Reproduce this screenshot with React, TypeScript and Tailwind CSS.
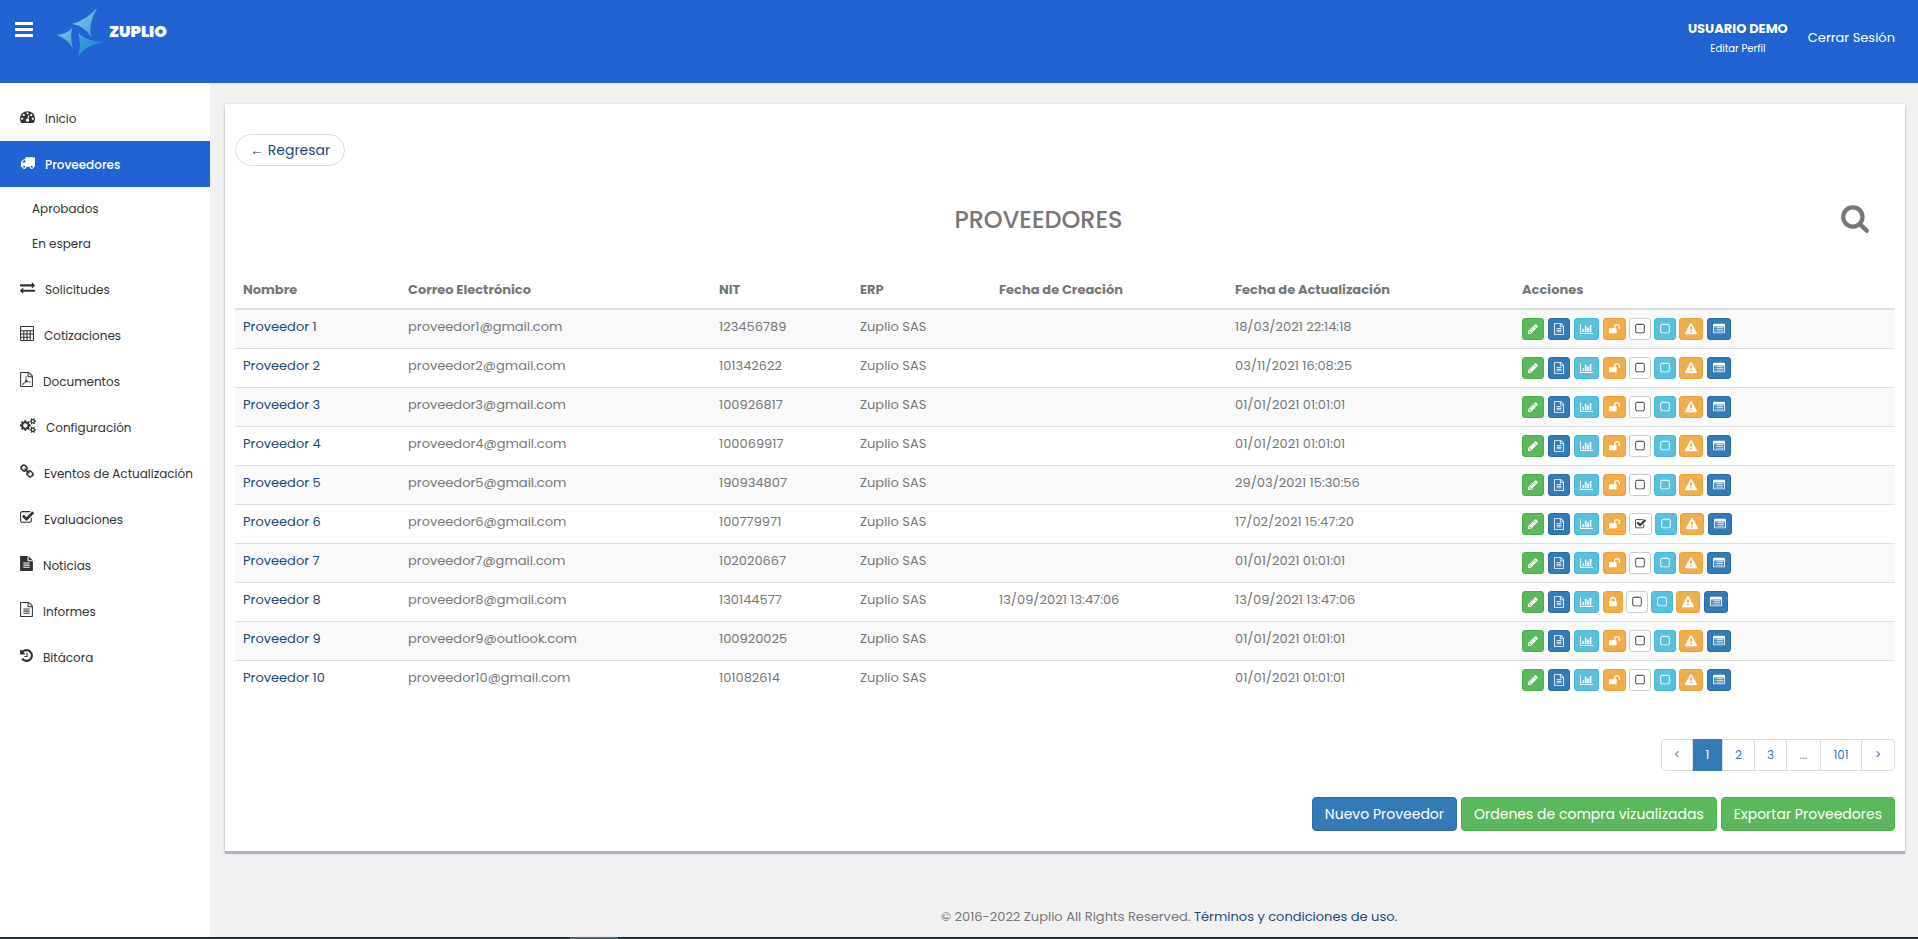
import type { ReactNode } from "react";

const icons = {
  bars: { w: 1536, d: "M1536 1344v128q0 26-19 45t-45 19h-1408q-26 0-45-19t-19-45v-128q0-26 19-45t45-19h1408q26 0 45 19t19 45zm0-512v128q0 26-19 45t-45 19h-1408q-26 0-45-19t-19-45v-128q0-26 19-45t45-19h1408q26 0 45 19t19 45zm0-512v128q0 26-19 45t-45 19h-1408q-26 0-45-19t-19-45v-128q0-26 19-45t45-19h1408q26 0 45 19t19 45z" },
  dashboard: { w: 1792, d: "M384 1152q0-53-37.500-90.500t-90.500-37.500-90.500 37.500-37.500 90.500 37.500 90.500 90.500 37.500 90.500-37.500 37.500-90.500zm192-448q0-53-37.500-90.500t-90.500-37.500-90.500 37.500-37.500 90.500 37.500 90.500 90.500 37.500 90.500-37.500 37.500-90.500zm428 481l101-382q6-26-7.500-48.500t-38.500-29.500-48 6.500-30 39.500l-101 382q-60 5-107 43.500t-63 98.500q-20 77 20 146t117 89 146-20 89-117q16-60-6-117t-72-91zm660-33q0-53-37.500-90.500t-90.500-37.500-90.500 37.500-37.500 90.500 37.500 90.500 90.500 37.500 90.500-37.500 37.500-90.500zm-640-640q0-53-37.500-90.500t-90.500-37.500-90.500 37.500-37.500 90.500 37.500 90.500 90.500 37.500 90.500-37.500 37.500-90.500zm448 192q0-53-37.500-90.500t-90.500-37.500-90.500 37.500-37.500 90.500 37.500 90.500 90.500 37.500 90.500-37.500 37.500-90.500zm320 448q0 261-141 483-19 29-54 29h-1402q-35 0-54-29-141-221-141-483 0-182 71-348t191-286 286-191 348-71 348 71 286 191 191 286 71 348z" },
  truck: { w: 1792, d: "M640 1408q0-52-38-90t-90-38-90 38-38 90 38 90 90 38 90-38 38-90zm-384-512h384v-256h-158q-13 0-22 9l-195 195q-9 9-9 22v30zm1280 512q0-52-38-90t-90-38-90 38-38 90 38 90 90 38 90-38 38-90zm256-1088v1024q0 15-4 26.500t-13.500 18.500-16.500 11.500-23.500 6-22.500 2-25.500 0-22.500-.5q0 106-75 181t-181 75-181-75-75-181h-384q0 106-75 181t-181 75-181-75-75-181h-64q-3 0-22.500.5t-25.500 0-22.500-2-23.500-6-16.500-11.500-13.500-18.500-4-26.500q0-26 19-45t45-19v-320q0-8-.5-35t0-38 2.500-34.500 6.500-37 14-30.500 22.500-30l198-198q19-19 50.500-32t58.500-13h160v-192q0-26 19-45t45-19h1024q26 0 45 19t19 45z" },
  exchange: { w: 1792, d: "M1792 1184v192q0 13-9.500 22.500t-22.500 9.500h-1376v192q0 13-9.500 22.500t-22.500 9.500q-12 0-24-10l-319-320q-9-9-9-22 0-14 9-23l320-320q9-9 23-9 13 0 22.500 9.500t9.500 22.500v192h1376q13 0 22.500 9.500t9.500 22.500zm0-544q0 14-9 23l-320 320q-9 9-23 9-13 0-22.500-9.500t-9.500-22.500v-192h-1376q-13 0-22.500-9.500t-9.500-22.500v-192q0-13 9.500-22.500t22.500-9.500h1376v-192q0-14 9-23t23-9q12 0 24 10l319 319q9 9 9 23z" },
  calculator: { w: 1664, d: "M128 0h1408q128 0 128 128v1536q0 128-128 128h-1408q-128 0-128-128v-1536q0-128 128-128zm0 128v384h1408v-384zm0 512v256h256v-256zm384 0v256h256v-256zm384 0v256h256v-256zm384 0v256h256v-256zm-1152 384v256h256v-256zm384 0v256h256v-256zm384 0v256h256v-256zm384 0v640h256v-640zm-1152 384v256h256v-256zm384 0v256h256v-256zm384 0v256h256v-256z" },
  filePdf: { w: 1536, d: "M1468 380q28 28 48 76t20 88v1152q0 40-28 68t-68 28h-1344q-40 0-68-28t-28-68v-1600q0-40 28-68t68-28h896q40 0 88 20t76 48zm-444-244v376h376q-10-29-22-41l-313-313q-12-12-41-22zm384 1528v-1024h-416q-40 0-68-28t-28-68v-416h-768v1536h1280zm-514-593q33 26 84 56 59-7 117-7 147 0 177 49 16 22 2 52 0 1-1 2l-2 2v1q-6 38-71 38-48 0-115-20t-130-53q-221 24-392 83-153 262-242 262-15 0-28-7l-24-12q-1-1-6-5-10-10-6-36 9-40 56-91.500t132-96.500q14-9 23 6 2 2 2 4 52-85 107-197 68-136 104-262-24-82-30.500-159.500t6.500-127.500q11-40 42-40h22q23 0 35 15 18 21 9 68-2 6-4 8 1 3 1 8v30q-2 123-14 192 55 164 146 238z" },
  cogs: { w: 1920, d: "M896 896q0-106-75-181t-181-75-181 75-75 181 75 181 181 75 181-75 75-181zm768 512q0-52-38-90t-90-38-90 38-38 90q0 53 37.500 90.500t90.500 37.500 90.500-37.500 37.500-90.500zm0-1024q0-52-38-90t-90-38-90 38-38 90q0 53 37.500 90.500t90.500 37.500 90.500-37.500 37.500-90.500zm-384 421v185q0 10-7 19.500t-16 10.500l-155 24q-11 35-32 76 34 48 90 115 7 11 7 20 0 12-7 19-23 30-82.500 89.500t-78.500 59.500q-11 0-21-7l-115-90q-37 19-77 31-11 108-23 155-7 24-30 24h-186q-11 0-20-7.500t-10-17.500l-23-153q-34-10-75-31l-118 89q-7 7-20 7-11 0-21-8-144-133-144-160 0-9 7-19 10-14 41-53t47-61q-23-44-35-82l-152-24q-10-1-17-9.500t-7-19.500v-185q0-10 7-19.500t16-10.500l155-24q11-35 32-76-34-48-90-115-7-11-7-20 0-12 7-20 22-30 82-89t79-59q11 0 21 7l115 90q34-18 77-32 11-108 23-154 7-24 30-24h186q11 0 20 7.500t10 17.500l23 153q34 10 75 31l118-89q8-7 20-7 11 0 21 8 144 133 144 160 0 8-7 19-12 16-42 54t-45 60q23 48 34 82l152 23q10 2 17 10.500t7 19.500zm640 533v140q0 16-149 31-12 27-30 52 51 113 51 138 0 4-4 7-122 71-124 71-8 0-46-47t-52-68q-20 2-30 2t-30-2q-14 21-52 68t-46 47q-2 0-124-71-4-3-4-7 0-25 51-138-18-25-30-52-149-15-149-31v-140q0-16 149-31 13-29 30-52-51-113-51-138 0-4 4-7 4-2 35-20t59-34 30-16q8 0 46 46.500t52 67.500q20-2 30-2t30 2q51-71 92-112l6-2q4 0 124 70 4 3 4 7 0 25-51 138 17 23 30 52 149 15 149 31zm0-1024v140q0 16-149 31-12 27-30 52 51 113 51 138 0 4-4 7-122 71-124 71-8 0-46-47t-52-68q-20 2-30 2t-30-2q-14 21-52 68t-46 47q-2 0-124-71-4-3-4-7 0-25 51-138-18-25-30-52-149-15-149-31v-140q0-16 149-31 13-29 30-52-51-113-51-138 0-4 4-7 4-2 35-20t59-34 30-16q8 0 46 46.500t52 67.500q20-2 30-2t30 2q51-71 92-112l6-2q4 0 124 70 4 3 4 7 0 25-51 138 17 23 30 52 149 15 149 31z" },
  chain: { w: 1664, x: 64, d: "M1520 1216q0-40-28-68l-208-208q-28-28-68-28-42 0-72 32 3 3 19 18.500t21.500 21.500 15 19 13 25.500 3.500 27.500q0 40-28 68t-68 28q-15 0-27.500-3.500t-25.500-13-19-15-21.500-21.500-18.500-19q-33 31-33 73 0 40 28 68l206 207q27 27 68 27 40 0 68-26l147-146q28-28 28-67zm-703-705q0-40-28-68l-206-207q-28-28-68-28-39 0-68 27l-147 146q-28 28-28 67 0 40 28 68l208 208q27 27 68 27 42 0 72-31-3-3-19-18.500t-21.500-21.500-15-19-13-25.500-3.500-27.500q0-40 28-68t68-28q15 0 27.500 3.500t25.500 13 19 15 21.500 21.500 18.500 19q33-31 33-73zm895 705q0 120-85 203l-147 146q-83 83-203 83-121 0-204-85l-206-207q-83-83-83-203 0-123 88-209l-88-88q-86 88-208 88-120 0-204-84l-208-208q-84-84-84-204t85-203l147-146q83-83 203-83 121 0 204 85l206 207q83 83 83 203 0 123-88 209l88 88q86-88 208-88 120 0 204 84l208 208q84 84 84 204z" },
  checkSquare: { w: 1664, x: 64, d: "M1472 930v318q0 119-84.500 203.500t-203.500 84.500h-832q-119 0-203.500-84.500t-84.500-203.500v-832q0-119 84.500-203.500t203.500-84.500h832q63 0 117 25 15 7 18 23 3 17-9 29l-49 49q-10 10-23 10-3 0-9-2-23-6-45-6h-832q-66 0-113 47t-47 113v832q0 66 47 113t113 47h832q66 0 113-47t47-113v-254q0-13 9-22l64-64q10-10 23-10 6 0 12 3 20 8 20 29zm231-489l-814 814q-24 24-57 24t-57-24l-430-430q-24-24-24-57t24-57l110-110q24-24 57-24t57 24l263 263 647-647q24-24 57-24t57 24l110 110q24 24 24 57t-24 57z" },
  fileSolid: { w: 1536, x: 128, d: "M1596 476q14 14 28 36h-472v-472q22 14 36 28zm-476 164h544v1056q0 40-28 68t-68 28h-1344q-40 0-68-28t-28-68v-1600q0-40 28-68t68-28h800v544q0 40 28 68t68 28zm160 736v-64q0-14-9-23t-23-9h-704q-14 0-23 9t-9 23v64q0 14 9 23t23 9h704q14 0 23-9t9-23zm0-256v-64q0-14-9-23t-23-9h-704q-14 0-23 9t-9 23v64q0 14 9 23t23 9h704q14 0 23-9t9-23zm0-256v-64q0-14-9-23t-23-9h-704q-14 0-23 9t-9 23v64q0 14 9 23t23 9h704q14 0 23-9t9-23z" },
  fileText: { w: 1536, x: 128, d: "M1596 380q28 28 48 76t20 88v1152q0 40-28 68t-68 28h-1344q-40 0-68-28t-28-68v-1600q0-40 28-68t68-28h896q40 0 88 20t76 48zm-444-244v376h376q-10-29-22-41l-313-313q-12-12-41-22zm384 1528v-1024h-416q-40 0-68-28t-28-68v-416h-768v1536h1280zm-1024-864q0-14 9-23t23-9h704q14 0 23 9t9 23v64q0 14-9 23t-23 9h-704q-14 0-23-9t-9-23v-64zm736 224q14 0 23 9t9 23v64q0 14-9 23t-23 9h-704q-14 0-23-9t-9-23v-64q0-14 9-23t23-9h704zm0 256q14 0 23 9t9 23v64q0 14-9 23t-23 9h-704q-14 0-23-9t-9-23v-64q0-14 9-23t23-9h704z" },
  history: { w: 1536, x: 128, d: "M1664 896q0 156-61 298t-164 245-245 164-298 61q-172 0-327-72.500t-264-204.500q-7-10-6.500-22.500t8.500-20.500l137-138q10-9 25-9 16 2 23 12 73 95 179 147t225 52q104 0 198.500-40.500t163.500-109.500 109.500-163.500 40.500-198.500-40.500-198.500-109.500-163.500-163.500-109.500-198.500-40.500q-98 0-188 35.500t-160 101.500l137 138q31 30 14 69-17 40-59 40h-448q-26 0-45-19t-19-45v-448q0-42 40-59 39-17 69 14l130 129q107-101 244.500-156.500t284.500-55.500q156 0 298 61t245 164 164 245 61 298zm-640-288v448q0 14-9 23t-23 9h-320q-14 0-23-9t-9-23v-64q0-14 9-23t23-9h224v-352q0-14 9-23t23-9h64q14 0 23 9t9 23z" },
  pencil: { w: 1536, x: 128, d: "M491 1536l91-91-235-235-91 91v107h128v128h107zm523-928q0-22-22-22-10 0-17 7l-542 542q-7 7-7 17 0 22 22 22 10 0 17-7l542-542q7-7 7-17zm-54-192l416 416-832 832h-416v-416zm683 96q0 53-37 90l-166 166-416-416 166-165q36-38 90-38 53 0 91 38l235 234q37 39 37 91z" },
  barChart: { w: 2048, d: "M640 896v512h-256v-512h256zm384-512v1024h-256v-1024h256zm1024 1152v128h-2048v-1536h128v1408h1920zm-640-896v768h-256v-768h256zm384-384v1152h-256v-1152h256z" },
  unlock: { w: 1664, x: 64, d: "M1728 576v256q0 26-19 45t-45 19h-64q-26 0-45-19t-19-45v-256q0-106-75-181t-181-75-181 75-75 181v192h96q40 0 68 28t28 68v576q0 40-28 68t-68 28h-960q-40 0-68-28t-28-68v-576q0-40 28-68t68-28h672v-192q0-185 131.500-316.500t316.500-131.500 316.500 131.500 131.500 316.500z" },
  lock: { w: 1152, x: 320, d: "M640 768h512v-192q0-106-75-181t-181-75-181 75-75 181v192zm832 96v576q0 40-28 68t-68 28h-960q-40 0-68-28t-28-68v-576q0-40 28-68t68-28h32v-192q0-184 132-316t316-132 316 132 132 316v192h32q40 0 68 28t28 68z" },
  square: { w: 1408, x: 192, d: "M1312 256h-832q-66 0-113 47t-47 113v832q0 66 47 113t113 47h832q66 0 113-47t47-113v-832q0-66-47-113t-113-47zm288 160v832q0 119-84.500 203.500t-203.500 84.500h-832q-119 0-203.500-84.500t-84.500-203.500v-832q0-119 84.500-203.500t203.500-84.500h832q119 0 203.500 84.500t84.500 203.500z" },
  warning: { w: 1792, d: "M1024 1375v-190q0-14-9.500-23.500t-22.500-9.500h-192q-13 0-22.500 9.500t-9.500 23.500v190q0 14 9.500 23.500t22.500 9.500h192q13 0 22.500-9.500t9.500-23.500zm-2-374l18-459q0-12-10-19-13-11-24-11h-220q-11 0-24 11-10 7-10 21l17 457q0 10 10 16.500t24 6.500h185q14 0 23.500-6.500t10.500-16.500zm-14-934l768 1408q35 63-2 126-17 29-46.500 46t-63.500 17h-1536q-34 0-63.500-17t-46.500-46q-37-63-2-126l768-1408q17-31 47-49t65-18 65 18 47 49z" },
  list: { w: 1792, d: "M160 128h1472q160 0 160 160v1088q0 160-160 160h-1472q-160 0-160-160v-1088q0-160 160-160zm-32 384v832q0 64 32 64h1472q32 0 32-64v-832zm128 128h128v128h-128zm256 0h1024v128h-1024zm-256 256h128v128h-128zm256 0h1024v128h-1024zm-256 256h128v128h-128zm256 0h1024v128h-1024z" },
  search: { w: 1664, x: 64, d: "M1216 832q0-185-131.500-316.500t-316.500-131.500-316.500 131.500-131.500 316.500 131.500 316.500 316.500 131.500 316.500-131.500 131.500-316.500zm512 832q0 52-38 90t-90 38q-54 0-90-38l-343-342q-179 124-399 124-143 0-273.500-55.500t-225-150-150-225-55.500-273.500 55.500-273.500 150-225 225-150 273.500-55.500 273.500 55.500 225 150 150 225 55.500 273.500q0 220-124 399l343 343q37 37 37 90z" },
};

type IconName = keyof typeof icons;

function Icon({ name, className }: { name: IconName; className: string }) {
  const icon: { w: number; x?: number; d: string } = icons[name];
  return (
    <svg viewBox={`${icon.x ?? 0} 0 ${icon.w} 1792`} className={`shrink-0 ${className}`} fill="currentColor" fillRule="evenodd" aria-hidden="true">
      <path d={icon.d} />
    </svg>
  );
}

function Logo() {
  return (
    <svg viewBox="0 0 48 50" className="h-[50px] w-12" aria-hidden="true">
      <defs>
        <linearGradient id="light" x1="0" y1="0" x2="1" y2="1">
          <stop offset="0" stopColor="#8ccbea" />
          <stop offset="1" stopColor="#3c9ddb" />
        </linearGradient>
        <linearGradient id="deep" x1="0" y1="0" x2="1" y2="1">
          <stop offset="0" stopColor="#45a6dd" />
          <stop offset="1" stopColor="#1278cf" />
        </linearGradient>
      </defs>
      <path d="M40 1Q31 17 34 30Q28 19 15 17Q29 13 40 1Z" fill="url(#light)" />
      <path d="M0 28Q10 27 15 21Q13 31 16 42Q11 32 0 28Z" fill="url(#light)" />
      <path d="M21 26Q29 34 46 35Q30 38 21 49Q25 38 21 26Z" fill="url(#deep)" />
    </svg>
  );
}

const menu: { label: string; icon: IconName; size: string }[] = [
  { label: "Solicitudes", icon: "exchange", size: "h-[15px] w-[15px]" },
  { label: "Cotizaciones", icon: "calculator", size: "h-[15px] w-[14px]" },
  { label: "Documentos", icon: "filePdf", size: "h-[15px] w-[13px]" },
  { label: "Configuración", icon: "cogs", size: "h-[15px] w-4" },
  { label: "Eventos de Actualización", icon: "chain", size: "h-[15px] w-[14px]" },
  { label: "Evaluaciones", icon: "checkSquare", size: "h-[15px] w-[14px]" },
  { label: "Noticias", icon: "fileSolid", size: "h-[15px] w-[13px]" },
  { label: "Informes", icon: "fileText", size: "h-[15px] w-[13px]" },
  { label: "Bitácora", icon: "history", size: "h-[15px] w-[13px]" },
];

const providers = [
  { id: 1, email: "proveedor1@gmail.com", nit: "123456789", created: "", updated: "18/03/2021 22:14:18" },
  { id: 2, email: "proveedor2@gmail.com", nit: "101342622", created: "", updated: "03/11/2021 16:08:25" },
  { id: 3, email: "proveedor3@gmail.com", nit: "100926817", created: "", updated: "01/01/2021 01:01:01" },
  { id: 4, email: "proveedor4@gmail.com", nit: "100069917", created: "", updated: "01/01/2021 01:01:01" },
  { id: 5, email: "proveedor5@gmail.com", nit: "190934807", created: "", updated: "29/03/2021 15:30:56" },
  { id: 6, email: "proveedor6@gmail.com", nit: "100779971", created: "", updated: "17/02/2021 15:47:20", checked: true },
  { id: 7, email: "proveedor7@gmail.com", nit: "102020667", created: "", updated: "01/01/2021 01:01:01" },
  { id: 8, email: "proveedor8@gmail.com", nit: "130144577", created: "13/09/2021 13:47:06", updated: "13/09/2021 13:47:06", locked: true },
  { id: 9, email: "proveedor9@outlook.com", nit: "100920025", created: "", updated: "01/01/2021 01:01:01" },
  { id: 10, email: "proveedor10@gmail.com", nit: "101082614", created: "", updated: "01/01/2021 01:01:01" },
];

const green = "border-[#4cae4c] bg-[#5cb85c] text-white";
const blue = "border-[#2e6da4] bg-[#337ab7] text-white";
const cyan = "border-[#46b8da] bg-[#5bc0de] text-white";
const orange = "border-[#eea236] bg-[#f0ad4e] text-white";
const white = "border-[#ccc] bg-white text-[#333]";

function MenuLink({ icon, size, active, children }: { icon: IconName; size: string; active?: boolean; children: ReactNode }) {
  return (
    <a
      href="#"
      className={`flex h-[46px] items-center gap-[10px] pt-px pl-5 ${active ? "bg-[#2163d3] font-medium text-white" : "text-[#333]"}`}
    >
      <Icon name={icon} className={`mb-1 ${size}`} />
      {children}
    </a>
  );
}

function ActionButton({ label, icon, size, color }: { label: string; icon: IconName; size: string; color: string }) {
  return (
    <button type="button" aria-label={label} className={`flex h-[22px] items-center rounded-[3px] border px-[5px] ${color}`}>
      <Icon name={icon} className={size} />
    </button>
  );
}

function Actions({ checked, locked }: { checked?: boolean; locked?: boolean }) {
  return (
    <div className="flex gap-1">
      <ActionButton label="Editar" icon="pencil" size="h-3 w-[10px]" color={green} />
      <ActionButton label="Documentos" icon="fileText" size="h-3 w-[10px]" color={blue} />
      <ActionButton label="Estadísticas" icon="barChart" size="h-3 w-[13px]" color={cyan} />
      <div className="flex gap-[3px]">
        {locked ? (
          <ActionButton label="Desbloquear" icon="lock" size="h-3 w-2" color={orange} />
        ) : (
          <ActionButton label="Bloquear" icon="unlock" size="h-3 w-[11px]" color={orange} />
        )}
        {checked ? (
          <ActionButton label="Desmarcar" icon="checkSquare" size="h-3 w-[11px]" color={white} />
        ) : (
          <ActionButton label="Marcar" icon="square" size="h-3 w-[10px]" color={white} />
        )}
        <ActionButton label="Seleccionar" icon="square" size="h-3 w-[10px]" color={cyan} />
        <ActionButton label="Alertas" icon="warning" size="h-3 w-3" color={orange} />
      </div>
      <ActionButton label="Detalle" icon="list" size="h-3 w-3" color={blue} />
    </div>
  );
}

export default function App() {
  return (
    <div className="flex min-h-screen flex-col bg-[#f1f1f1] font-[Poppins,Inter,sans-serif] text-[13px] leading-[18px] text-[#777]">
      <header className="flex h-[83px] shrink-0 items-start justify-between bg-[#2163d3] text-white">
        <div className="flex items-center pt-[7px] pl-[15px]">
          <button type="button" aria-label="Menú" className="mr-6 pb-[5px]">
            <Icon name="bars" className="h-[21px] w-[18px]" />
          </button>
          <Logo />
          <span className="pb-px pl-1 text-base font-black">ZUPLIO</span>
        </div>
        <div className="flex gap-5 pt-5 pr-[23px]">
          <div className="text-center">
            <p className="font-bold">USUARIO DEMO</p>
            <a href="#" className="block pt-[2px] text-[10px]">Editar Perfil</a>
          </div>
          <a href="#" className="pt-[9px]">Cerrar Sesión</a>
        </div>
      </header>

      <div className="flex grow">
        <nav className="w-[210px] shrink-0 bg-white pt-3 text-xs">
          <MenuLink icon="dashboard" size="h-[15px] w-[15px]">Inicio</MenuLink>
          <MenuLink icon="truck" size="h-[15px] w-[15px]" active>Proveedores</MenuLink>
          <div className="pt-1 pb-[5px] text-[#333]">
            <a href="#" className="flex h-[35px] items-center pl-8">Aprobados</a>
            <a href="#" className="flex h-[35px] items-center pl-8">En espera</a>
          </div>
          {menu.map((item) => (
            <MenuLink key={item.label} icon={item.icon} size={item.size}>{item.label}</MenuLink>
          ))}
        </nav>

        <div className="flex min-w-0 grow flex-col">
          <main className="mt-[21px] mr-[13px] ml-[15px] bg-white px-[10px] pt-[30px] pb-5 shadow-[0_3px_1px_#a9b4c2,0_1px_3px_#bbb]">
            <button type="button" className="h-8 rounded-full border border-[#ddd] px-[14px] text-sm text-[#1c4a7c]">
              <span className="font-['Liberation_Sans']">←</span> Regresar
            </button>

            <div className="flex items-center pt-[34px]">
              <h1 className="grow pt-1 pl-5 text-center text-2xl font-medium">PROVEEDORES</h1>
              <button type="button" aria-label="Buscar" className="flex w-[73px] justify-center pr-2">
                <Icon name="search" className="h-[30px] w-7" />
              </button>
            </div>

            <table className="mt-9 w-full table-fixed text-left">
              <thead>
                <tr className="border-b-2 border-[#ddd] [&>th]:px-2 [&>th]:py-[9px]">
                  <th className="w-[165px]">Nombre</th>
                  <th className="w-[311px]">Correo Electrónico</th>
                  <th className="w-[141px]">NIT</th>
                  <th className="w-[139px]">ERP</th>
                  <th className="w-[236px]">Fecha de Creación</th>
                  <th className="w-[287px]">Fecha de Actualización</th>
                  <th>Acciones</th>
                </tr>
              </thead>
              <tbody>
                {providers.map((p) => (
                  <tr key={p.id} className="border-b border-[#ddd] align-top last:border-0 odd:bg-[#f9f9f9] [&>td]:p-2">
                    <td><a href="#" className="text-[#1c4a7c]">Proveedor {p.id}</a></td>
                    <td>{p.email}</td>
                    <td>{p.nit}</td>
                    <td>Zuplio SAS</td>
                    <td>{p.created}</td>
                    <td>{p.updated}</td>
                    <td><Actions checked={p.checked} locked={p.locked} /></td>
                  </tr>
                ))}
              </tbody>
            </table>

            <div className="flex justify-end pt-10 text-xs">
              <div className="flex h-8 divide-x divide-[#ddd] rounded border border-[#ddd] text-[#337ab7]">
                <button type="button" className="w-[31px] text-[#777]">&lt;</button>
                <button type="button" className="-my-px w-[30px] bg-[#337ab7] text-white">1</button>
                <button type="button" className="w-8">2</button>
                <button type="button" className="w-8">3</button>
                <button type="button" className="w-[34px] text-[#777]">...</button>
                <button type="button" className="w-[41px]">101</button>
                <button type="button" className="w-8">&gt;</button>
              </div>
            </div>

            <div className="flex justify-end gap-1 pt-[26px] text-sm">
              <button type="button" className={`h-[34px] rounded border px-3 ${blue}`}>Nuevo Proveedor</button>
              <button type="button" className={`h-[34px] rounded border px-3 ${green}`}>Ordenes de compra vizualizadas</button>
              <button type="button" className={`h-[34px] rounded border px-3 ${green}`}>Exportar Proveedores</button>
            </div>
          </main>

          <footer className="mt-auto pb-[11px] pl-[210px] text-center">
            © 2016-2022 Zuplio All Rights Reserved. <a href="#" className="text-[#1c4a7c]">Términos y condiciones de uso.</a>
          </footer>
        </div>
      </div>

      <div className="h-[2px] shrink-0 bg-[#1c3144] pl-[570px]">
        <div className="h-full w-12 bg-[#53636d]" />
      </div>
    </div>
  );
}
